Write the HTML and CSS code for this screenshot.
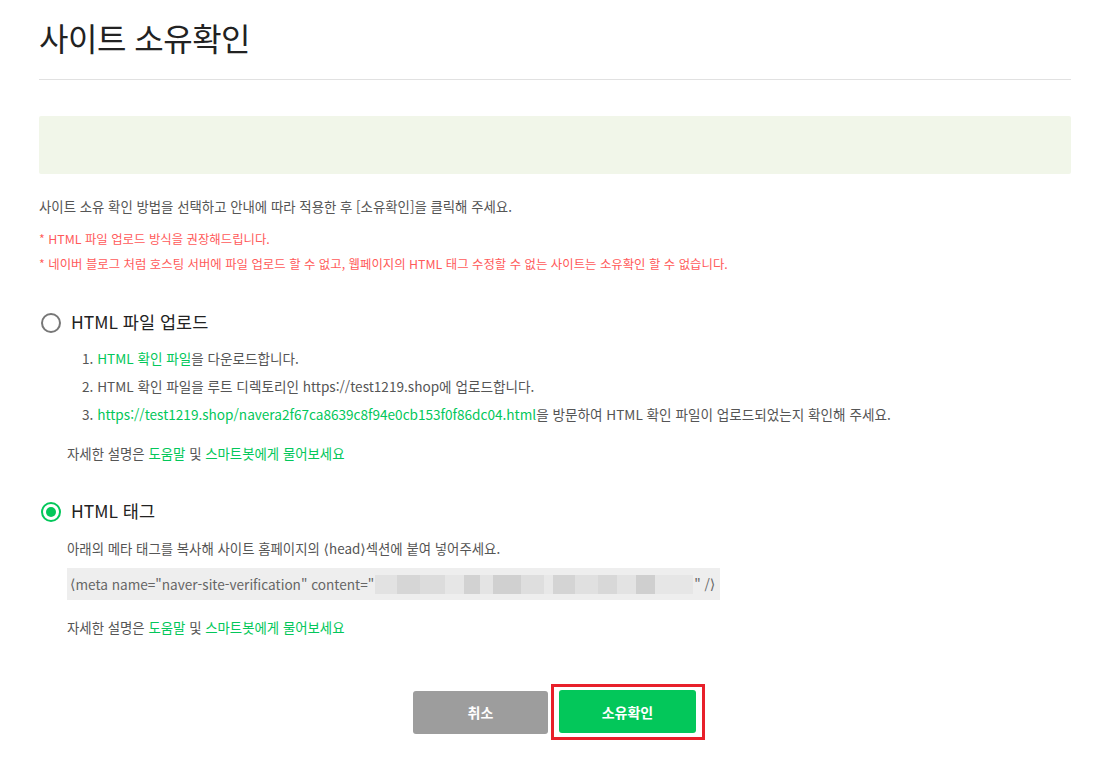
FILE: index.html
```html
<!DOCTYPE html>
<html lang="ko">
<head>
<meta charset="utf-8">
<title>사이트 소유확인</title>
<link rel="stylesheet" href="styles.css">
</head>
<body>
<div class="page">
  <h1 class="title">사이트 소유확인</h1>
  <div class="notice-box"></div>
  <p class="intro">사이트 소유 확인 방법을 선택하고 안내에 따라 적용한 후 [소유확인]을 클릭해 주세요.</p>
  <p class="warn">* HTML 파일 업로드 방식을 권장해드립니다.</p>
  <p class="warn">* 네이버 블로그 처럼 호스팅 서버에 파일 업로드 할 수 없고, 웹페이지의 HTML 태그 수정할 수 없는 사이트는 소유확인 할 수 없습니다.</p>

  <section class="method">
    <label class="radio-row"><span class="radio"></span><span class="radio-label">HTML 파일 업로드</span></label>
    <ol class="steps">
      <li>1. <a class="link">HTML 확인 파일</a>을 다운로드합니다.</li>
      <li>2. HTML 확인 파일을 루트 디렉토리인 https://test1219.shop에 업로드합니다.</li>
      <li>3. <a class="link">https://test1219.shop/navera2f67ca8639c8f94e0cb153f0f86dc04.html</a>을 방문하여 HTML 확인 파일이 업로드되었는지 확인해 주세요.</li>
    </ol>
    <p class="help">자세한 설명은 <a class="link">도움말</a> 및 <a class="link">스마트봇에게 물어보세요</a></p>
  </section>

  <section class="method method-tag">
    <label class="radio-row"><span class="radio checked"></span><span class="radio-label">HTML 태그</span></label>
    <p class="desc">아래의 메타 태그를 복사해 사이트 홈페이지의 <span class="ang">⟨</span>head<span class="ang">⟩</span>섹션에 붙여 넣어주세요.</p>
    <div class="code"><span class="ang">⟨</span>meta name="naver-site-verification" content="<span class="blur"></span>" /<span class="ang">⟩</span></div>
    <p class="help help-tag">자세한 설명은 <a class="link">도움말</a> 및 <a class="link">스마트봇에게 물어보세요</a></p>
  </section>

  <div class="actions">
    <button class="btn btn-cancel">취소</button>
    <div class="highlight"><button class="btn btn-ok">소유확인</button></div>
  </div>
</div>
</body>
</html>
```

FILE: styles.css
```css
* { box-sizing: border-box; }
html, body { margin: 0; padding: 0; background: #fff; }
body {
  font-family: "Noto Sans CJK KR", "Noto Sans", sans-serif;
  color: #555;
}
.page {
  width: 1032px;
  margin-left: 39px;
}
.title {
  margin: 0;
  padding-top: 14px;
  font-size: 32px;
  font-weight: 400;
  line-height: 46px;
  color: #222;
  letter-spacing: -0.5px;
  height: 80px;
  border-bottom: 1px solid #e1e1e1;
}
.notice-box {
  margin-top: 36px;
  height: 58px;
  background: #f1f6e9;
  border-radius: 2px;
}
.intro {
  margin: 22px 0 0;
  font-size: 13.4px;
  line-height: 20px;
  color: #555;
}
.warn {
  margin: 14px 0 0;
  font-size: 12.4px;
  line-height: 18px;
  color: #ff5a5a;
}
.warn + .warn { margin-top: 7px; }
.method { margin-top: 38px; }
.method-tag { margin-top: 37px; }
.radio-row {
  display: flex;
  align-items: center;
  height: 24px;
  gap: 10px;
  padding-left: 2px;
}
.radio {
  width: 20px;
  height: 20px;
  border: 2px solid #777;
  border-radius: 50%;
  display: flex;
  align-items: center;
  justify-content: center;
}
.radio.checked { border-color: #03c75a; }
.radio.checked::after {
  content: "";
  width: 10px;
  height: 10px;
  border-radius: 50%;
  background: #03c75a;
}
.radio-label {
  font-size: 17.5px;
  line-height: 22px;
  color: #222;
  margin-top: -2px;
}
.link { color: #03c75a; text-decoration: none; }
.ang { font-family: "DejaVu Sans", sans-serif; font-size: 14px; }
.steps {
  list-style: none;
  margin: 9px 0 0;
  padding-left: 43px;
}
.steps li {
  font-size: 13.6px;
  line-height: 28px;
  color: #555;
}
.help {
  margin: 15px 0 0;
  padding-left: 28px;
  font-size: 13.4px;
  line-height: 20px;
  color: #555;
}
.help-tag { margin-top: 17px; }
.desc {
  margin: 14px 0 0;
  padding-left: 28px;
  font-size: 13.4px;
  line-height: 20px;
}
.code {
  margin: 9px 0 0 28px;
  width: 653px;
  height: 32px;
  background: #eee;
  display: flex;
  align-items: center;
  padding-left: 3px;
  font-size: 13.6px;
  color: #666;
  white-space: nowrap;
}
.blur {
  display: inline-block;
  width: 318px;
  height: 19px;
  margin: 0 1px;
  background:
    linear-gradient(90deg,
      #e2e2e2 0 7%, #d6d6d6 7% 14%, #dcdcdc 14% 22%, #e6e6e6 22% 28%,
      #d2d2d2 28% 33%, #e4e4e4 33% 37%, #d0d0d0 37% 46%, #dedede 46% 53%,
      #e8e8e8 53% 56%, #d4d4d4 56% 63%, #e0e0e0 63% 70%, #d8d8d8 70% 76%,
      #e3e3e3 76% 82%, #cfcfcf 82% 88%, #e6e6e6 88% 100%);
}
.actions {
  margin-top: 47px;
  display: flex;
  justify-content: center;
  align-items: center;
  gap: 3px;
  padding-left: 8px;
}
.btn {
  border: 0;
  font-family: inherit;
  font-size: 14px;
  font-weight: 700;
  color: #fff;
  height: 43px;
  border-radius: 3px;
  cursor: pointer;
}
.btn-cancel { width: 135px; background: #9d9d9d; }
.btn-ok { width: 137px; background: #03c75a; }
.highlight {
  border: 3px solid #e8202a;
  padding: 3px 6px 4px 5px;
}
```
